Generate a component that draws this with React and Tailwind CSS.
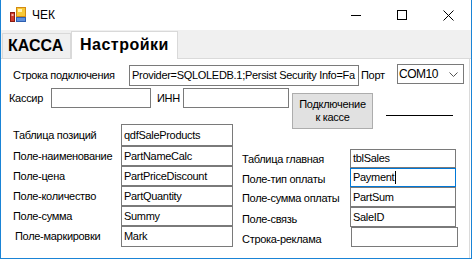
import React from "react";

function AppIcon() {
  return (
    <svg width="17" height="16" viewBox="0 0 17 16" className="shrink-0">
      <rect x="0.5" y="5.5" width="4" height="9" fill="#d23a2a" stroke="#8a1c12" />
      <rect x="1.5" y="7" width="2" height="2" fill="#f3b0a8" />
      <rect x="6.5" y="0.5" width="9" height="9" fill="#f7c836" stroke="#d38a12" />
      <rect x="8" y="2" width="4" height="3" fill="#fff2b0" />
      <rect x="6.5" y="10.5" width="9" height="4" fill="#5d8fdc" stroke="#2d5fb0" />
    </svg>
  );
}

function Field({ w, h = 20, value = "", focused = false, cursor = false, className = "" }) {
  return (
    <div
      className={
        "shrink-0 bg-white border pl-[2px] flex items-center overflow-hidden whitespace-nowrap " +
        (focused ? "border-[#0078d7] " : "border-[#7a7a7a] ") +
        className
      }
      style={{ width: w, height: h }}
    >
      <span>{value}</span>
      {cursor && <span className="w-px h-[13px] bg-black ml-px" />}
    </div>
  );
}

function LeftRow({ label, value, h = 20, labelClass = "" }) {
  return (
    <div className="flex" style={{ height: h }}>
      <span className={"w-[108px] shrink-0 flex items-center " + labelClass}>{label}</span>
      <Field w={112} h={h} value={value} />
    </div>
  );
}

function RightRow({ label, value, h = 20, pt = "", focused, cursor, boxClass = "", w = 106 }) {
  return (
    <div className="flex" style={{ height: h }}>
      <span className={"w-[108px] shrink-0 flex items-center " + pt}>{label}</span>
      <Field w={w} h={h} value={value} focused={focused} cursor={cursor} className={boxClass} />
    </div>
  );
}

export default function App() {
  return (
    <div className="w-[472px] h-[259px] bg-white border-x border-b border-[#1a84d6] flex flex-col overflow-hidden text-[11px] tracking-[-0.3px] text-black font-['Liberation_Sans',Arial,sans-serif]">
      {/* title bar */}
      <div className="h-[30px] shrink-0 flex items-center">
        <div className="ml-[9px]">
          <AppIcon />
        </div>
        <span className="ml-[5px] text-[12px] tracking-normal">ЧЕК</span>
        <div className="ml-auto flex h-full">
          <div className="w-[46px] flex items-center justify-center">
            <span className="w-[10px] h-px bg-black" />
          </div>
          <div className="w-[46px] flex items-center justify-center">
            <span className="w-[10px] h-[10px] border border-black" />
          </div>
          <div className="w-[46px] flex items-center justify-center">
            <svg width="11" height="11" viewBox="0 0 11 11">
              <path d="M0.5 0.5 L10.5 10.5 M10.5 0.5 L0.5 10.5" stroke="#000" strokeWidth="1" />
            </svg>
          </div>
        </div>
      </div>

      {/* tabs */}
      <div className="h-[29px] shrink-0 bg-[#f0f0f0] border-b border-[#dadada] flex items-end pl-px text-[16px] font-bold tracking-normal">
        <div className="w-[69px] h-[25px] border-x border-t border-[#d9d9d9] flex items-center pl-[5px]">
          КАССА
        </div>
        <div className="w-[107px] h-[28px] -mb-px bg-white border-x border-t border-[#d9d9d9] flex items-center pl-[8px] pb-[2px] tracking-[0.5px]">
          Настройки
        </div>
      </div>

      {/* tab page */}
      <div className="flex-1 mr-px border-r border-[#dadada] flex flex-col">
        <div className="mt-[6px] h-[21px] flex items-center pl-[12px]">
          <span className="w-[116px] shrink-0">Строка подключения</span>
          <Field w={230} h={21} value="Provider=SQLOLEDB.1;Persist Security Info=Fa" />
          <span className="ml-[2px] w-[36px] shrink-0">Порт</span>
          <div className="w-[67px] h-[20px] self-start -mt-px border border-[#7a7a7a] flex items-center pl-px text-[12px] tracking-[-0.5px]">
            <span>COM10</span>
            <svg width="9" height="5" viewBox="0 0 9 5" className="ml-auto mr-[5px]">
              <path d="M0.5 0.5 L4.5 4.5 L8.5 0.5" fill="none" stroke="#555" strokeWidth="1" />
            </svg>
          </div>
        </div>

        <div className="mt-[2px] h-[20px] flex items-start pl-[8px]">
          <span className="w-[42px] h-[20px] shrink-0 flex items-center">Кассир</span>
          <Field w={100} />
          <span className="ml-[6px] w-[26px] h-[20px] shrink-0 flex items-center">ИНН</span>
          <Field w={106} />
          <button className="ml-[3px] mt-[5px] w-[81px] h-[36px] shrink-0 bg-[#e1e1e1] border border-[#adadad] leading-[13px] text-center">
            Подключение
            <br />
            к кассе
          </button>
          <span className="ml-[13px] mt-[27px] w-[67px] h-px bg-black shrink-0" />
        </div>

        <div className="flex items-start">
          <div className="mt-[16px] pl-[12px] flex flex-col">
            <LeftRow label="Таблица позиций" value="qdfSaleProducts" h={22} />
            <LeftRow label="Поле-наименование" value="PartNameCalc" />
            <LeftRow label="Поле-цена" value="PartPriceDiscount" />
            <LeftRow label="Поле-количество" value="PartQuantity" />
            <LeftRow label="Поле-сумма" value="Summy" />
            <LeftRow label="Поле-маркировки" value="Mark" h={21} labelClass="pl-[2px]" />
          </div>
          <div className="ml-[9px] mt-[41px] flex flex-col">
            <RightRow label="Таблица главная" value="tblSales" h={19} pt="pt-[2px]" />
            <RightRow label="Поле-тип оплаты" value="Payment" h={19} pt="pt-[4px]" focused cursor />
            <RightRow label="Поле-сумма оплаты" value="PartSum" pt="pt-[3px]" />
            <RightRow label="Поле-связь" value="SaleID" pt="pt-[5px]" />
            <RightRow label="Строка-реклама" value="" pt="pt-[5px]" w={107} boxClass="ml-px" />
          </div>
        </div>
      </div>
    </div>
  );
}
